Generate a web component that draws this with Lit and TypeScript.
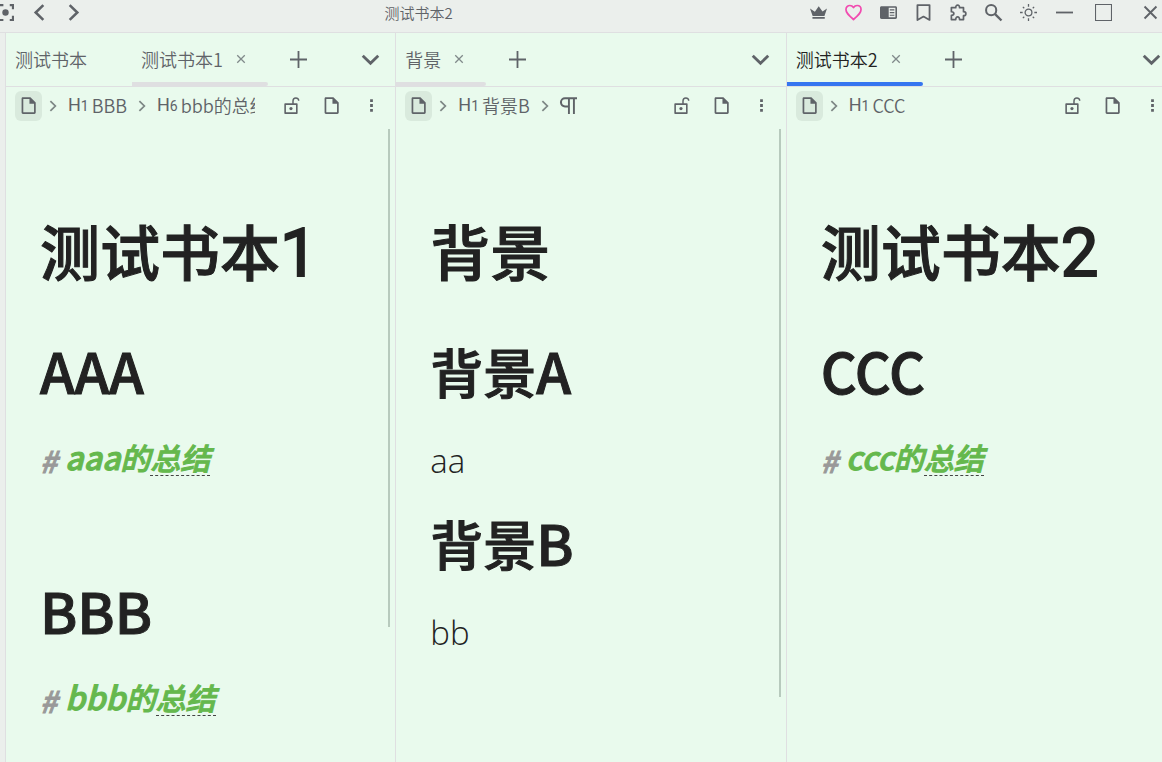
import { LitElement, html, css, svg, nothing } from "lit";
import { customElement, property } from "lit/decorators.js";

const icons: Record<string, unknown> = {
  focus: svg`<path d="M1 5V1h5M12 1h3v4M1 11v4h5M12 15h3v-4" fill="none" stroke="currentColor" stroke-width="2"/><circle cx="8" cy="8" r="3" fill="currentColor"/>`,
  back: svg`<path d="M11.6 1 4.4 8l7.200 7" fill="none" stroke="currentColor" stroke-width="2.400"/>`,
  forward: svg`<path d="M4.400 1l7.200 7-7.200 7" fill="none" stroke="currentColor" stroke-width="2.400"/>`,
  crown: svg`<path d="M2.300 13.800h11.600v-1.500H2.300zM0 4.300l2.500 7h11.100L16 4.300l-4.200 2.800L8.200 2 4.600 7.200z" fill="currentColor"/>`,
  heart: svg`<path d="M8 14.600C3 10.300.9 8.300.9 5.200.9 3 2.500 1.400 4.600 1.400 6 1.400 7.200 2.100 8 3.300c.8-1.200 2-1.900 3.400-1.900 2.100 0 3.700 1.600 3.700 3.800 0 3.100-2.100 5.100-7.100 9.400z" fill="none" stroke="#f14bb0" stroke-width="1.600" stroke-linejoin="round"/>`,
  panel: svg`<path fill="currentColor" fill-rule="evenodd" d="M1.500 2h13c1 0 1.500.6 1.500 1.500v9c0 .9-.5 1.500-1.500 1.500h-13C.5 14 0 13.400 0 12.500v-9C0 2.600.5 2 1.500 2zM8.200 3.500v9h6.300v-9zM9.200 5h4.300v1.100H9.200zM9.200 7.500h4.300v1.100H9.200zM9.200 10h4.300v1.100H9.200z"/>`,
  bookmark: svg`<path d="M2.300 1h11.400v14L8 11.800 2.300 15z" fill="none" stroke="currentColor" stroke-width="1.700" stroke-linejoin="round"/>`,
  puzzle: svg`<path d="M1.300 3.500h4.100c-.2-3.300 3.800-3.300 3.600 0h3.700v3.700c3 0 3 3.800 0 3.800v3.700H9c.1-3.400-3.700-3.400-3.600 0H1.300v-3.900c3.100 0 3.100-3.500 0-3.500z" fill="none" stroke="currentColor" stroke-width="1.600" stroke-linejoin="round"/>`,
  search: svg`<circle cx="5.800" cy="5.800" r="4.800" fill="none" stroke="currentColor" stroke-width="1.900"/><path d="M9.500 9.500l6 6" stroke="currentColor" stroke-width="2.200"/>`,
  sun: svg`<circle cx="8" cy="8" r="3.200" fill="none" stroke="currentColor" stroke-width="1.200"/><path d="M8 0v2.500M8 13.500V16M0 8h2.500M13.500 8H16M2.700 2.700l1.300 1.300M12 12l1.300 1.300M2.700 13.300 4 12M12 4l1.300-1.300" stroke="currentColor" stroke-width="1.200"/>`,
  minimize: svg`<path d="M0 8h16" stroke="currentColor" stroke-width="1.700"/>`,
  maximize: svg`<path d="M.5.5h15v15H.5z" fill="none" stroke="currentColor" stroke-width="1"/>`,
  close: svg`<path d="M2.400 2.400l11.200 11.200M13.600 2.400 2.400 13.600" stroke="currentColor" stroke-width="1.800"/>`,
  cross: svg`<path d="M3.700 3.700l8.600 8.600M12.300 3.700l-8.600 8.600" stroke="currentColor" stroke-width="1.500"/>`,
  plus: svg`<path d="M8 0v16M0 8h16" stroke="currentColor" stroke-width="1.700"/>`,
  down: svg`<path d="M.7 4.500 8 11.500l7.300-7" fill="none" stroke="currentColor" stroke-width="2.700"/>`,
  arrow: svg`<path d="M5 2.300l5.700 5.700L5 13.700" fill="none" stroke="currentColor" stroke-width="2"/>`,
  file: svg`<path d="M1.500 1.500C1.500.7 2 .200 2.800.200h7L14.800 5.100v9.500c0 .8-.5 1.300-1.300 1.300H2.800c-.8 0-1.300-.5-1.300-1.300zM3.100 1.800v12.500h10.100V6.300H8.900V1.800z" fill="currentColor" fill-rule="evenodd"/>`,
  lock: svg`<path d="M2 6.700h11v8.500H2z" fill="none" stroke="currentColor" stroke-width="1.500" stroke-linejoin="round"/><path d="M9.400 6.600V3.800c0-3.700 5.400-3.700 5.400-.3" fill="none" stroke="currentColor" stroke-width="1.400"/><circle cx="7.500" cy="10.900" r="1.500" fill="currentColor"/>`,
  more: svg`<path d="M6.700 2.200h2.600v2.600H6.700zM6.700 6.700h2.600v2.600H6.700zM6.700 11.300h2.600v2.600H6.700z" fill="currentColor"/>`,
  pilcrow: svg`<path d="M4.700.3h11.300v1.800h-2V16h-1.800V2.200H9.300V16H7.500V9.800H4.700A4.700 4.700 0 0 1 4.700.3zM7.500 2.200H4.700a2.850 2.850 0 0 0 0 5.700h2.800z" fill="currentColor" fill-rule="evenodd"/>`,
};

@customElement("ui-icon")
class UiIcon extends LitElement {
  @property() name = "file";
  static styles = css`
    :host { display: inline-flex; width: 17px; height: 17px; flex: none; }
    svg { width: 100%; height: 100%; overflow: visible; display: block; }
  `;
  render() {
    return html`<svg viewBox="0 0 16 16" aria-hidden="true">${icons[this.name]}</svg>`;
  }
}

interface Tab { title: string; active?: boolean; }
interface Crumb { level?: number; text?: string; icon?: string; }
interface Block {
  kind: "h1" | "h6" | "p" | "blank";
  text?: string;
  latin?: string;
  marked?: string;
}
interface Pane {
  title: string;
  titleDigit?: string;
  focused?: boolean;
  scroll?: number;
  tabs: Tab[];
  crumbs: Crumb[];
  blocks: Block[];
}

const panes: Pane[] = [
  {
    title: "测试书本",
    titleDigit: "1",
    scroll: 498,
    tabs: [{ title: "测试书本" }, { title: "测试书本1", active: true }],
    crumbs: [{ level: 1, text: "BBB" }, { level: 6, text: "bbb的总结" }],
    blocks: [
      { kind: "h1", latin: "AAA" },
      { kind: "h6", latin: "aaa", text: "的", marked: "总结" },
      { kind: "blank" },
      { kind: "h1", latin: "BBB" },
      { kind: "h6", latin: "bbb", text: "的", marked: "总结" },
    ],
  },
  {
    title: "背景",
    scroll: 568,
    tabs: [{ title: "背景", active: true }],
    crumbs: [{ level: 1, text: "背景B" }, { icon: "pilcrow" }],
    blocks: [
      { kind: "h1", text: "背景", latin: "A" },
      { kind: "p", text: "aa" },
      { kind: "h1", text: "背景", latin: "B" },
      { kind: "p", text: "bb" },
    ],
  },
  {
    title: "测试书本",
    titleDigit: "2",
    focused: true,
    tabs: [{ title: "测试书本2", active: true }],
    crumbs: [{ level: 1, text: "CCC" }],
    blocks: [
      { kind: "h1", latin: "CCC" },
      { kind: "h6", latin: "ccc", text: "的", marked: "总结" },
    ],
  },
];

@customElement("editor-pane")
class EditorPane extends LitElement {
  @property({ attribute: false }) pane!: Pane;

  static styles = css`
    :host {
      display: flex; flex-direction: column; position: relative; min-width: 0;
      border-left: 1px solid #dfdfe1; background: #e9faed; color: #5f6368;
    }
    button {
      border: 0; padding: 0; margin: 0; background: none; color: inherit; font: inherit;
      display: flex; align-items: center; justify-content: center; cursor: pointer;
    }
    .tabs { display: flex; height: 53px; border-bottom: 1px solid #dfdfe1; }
    .tab { display: flex; align-items: center; position: relative; padding: 0 20px 2px 9px; gap: 11px; }
    .tab.active::after {
      content: ""; position: absolute; left: 0; right: 0; bottom: 0; height: 4px;
      border-radius: 0 2px 2px 0; background: #dfdfe1;
    }
    .focused .tab.active { color: #222; }
    .focused .tab.active::after { background: #3575f0; }
    .tab-close { width: 14px; height: 16px; color: #80898a; }
    .tab-close ui-icon { width: 14px; height: 14px; }
    .tab:not(.active) .tab-close { visibility: hidden; }
    .add { width: 62px; }
    .switch { width: 50px; margin-left: auto; }
    .bar { display: flex; align-items: center; height: 37px; padding: 0 4px 0 9px; }
    .crumbs { display: flex; align-items: center; flex: 1; min-width: 0; overflow: hidden; margin-right: 16px; white-space: nowrap; }
    .doc { width: 27px; height: 30px; border-radius: 6px; background: #d9eadd; flex: none; }
    .arrow { width: 14px; height: 14px; margin: 0 8px 0 4px; color: #7d8785; }
    .crumb { flex: none; gap: 3px; margin-right: 4px; padding-bottom: 2px; }
    .crumb ui-icon { padding-top: 2px; }
    .level { font: 400 18px/24px "Roboto", sans-serif; }
    .level sub { font-size: 14px; line-height: 1; vertical-align: baseline; }
    .tool { width: 40px; height: 30px; flex: none; }
    .content {
      flex: 1; display: flex; flex-direction: column; gap: 24px; padding: 86px 20px 24px 34px;
      color: #222; font-family: "Noto Sans CJK SC", sans-serif;
    }
    h1, h2, h6, p { margin: 0; white-space: nowrap; }
    h1, h2 { font-weight: 500; line-height: 80px; height: 80px; -webkit-text-stroke: 1px #222; }
    h1 { font-size: 60px; margin-bottom: 17px; }
    h1 .latin { font: 400 67px/0 "Roboto", sans-serif; -webkit-text-stroke: 2px #222; }
    h2 { font-size: 53px; }
    h2 .latin { font-size: 56px; line-height: 0; }
    h6, p { height: 44px; line-height: 44px; }
    h6 { display: flex; align-items: center; font-size: 30px; font-style: italic; font-weight: 500; color: #65b84d; -webkit-text-stroke: 1px currentColor; }
    h6 .latin { font-size: 32px; line-height: 0; }
    .hash { color: #999; margin-right: 8px; padding-top: 6px; }
    .marked { display: inline-block; line-height: 36px; border-bottom: 1px dashed #444; }
    p { font: 300 33px/52px "Open Sans", "Noto Sans CJK SC", sans-serif; }
    .thumb { position: absolute; right: 5px; top: 96px; width: 2px; background: #b7cabd; }
  `;

  private block(b: Block) {
    const latin = b.latin ? html`<span class="latin">${b.latin}</span>` : nothing;
    switch (b.kind) {
      case "h1": return html`<h2>${b.text ?? ""}${latin}</h2>`;
      case "h6": return html`<h6><span class="hash">#</span><span>${latin}${b.text}<span class="marked">${b.marked}</span></span></h6>`;
      default: return html`<p>${b.text ?? ""}</p>`;
    }
  }

  render() {
    const p = this.pane;
    return html`
      <div class="tabs ${p.focused ? "focused" : ""}">
        ${p.tabs.map((t) => html`
          <div class="tab ${t.active ? "active" : ""}">
            <button>${t.title}</button>
            <button class="tab-close" aria-label="关闭"><ui-icon name="cross"></ui-icon></button>
          </div>`)}
        <button class="add" aria-label="新建"><ui-icon name="plus"></ui-icon></button>
        <button class="switch" aria-label="切换页签"><ui-icon name="down"></ui-icon></button>
      </div>
      <div class="bar">
        <nav class="crumbs">
          <button class="doc" aria-label="文档"><ui-icon name="file"></ui-icon></button>
          ${p.crumbs.map((c) => html`
            <ui-icon class="arrow" name="arrow"></ui-icon>
            <button class="crumb" aria-label=${c.text ?? "段落"}>
              ${c.icon
                ? html`<ui-icon name=${c.icon}></ui-icon>`
                : html`<span class="level">H<sub>${c.level}</sub></span><span>${c.text}</span>`}
            </button>`)}
        </nav>
        <button class="tool" aria-label="锁定"><ui-icon name="lock"></ui-icon></button>
        <button class="tool" aria-label="文档菜单"><ui-icon name="file"></ui-icon></button>
        <button class="tool" aria-label="更多"><ui-icon name="more"></ui-icon></button>
      </div>
      <article class="content">
        <h1>${p.title}${p.titleDigit ? html`<span class="latin">${p.titleDigit}</span>` : nothing}</h1>
        ${p.blocks.map((b) => this.block(b))}
      </article>
      ${p.scroll ? html`<div class="thumb" style="height:${p.scroll}px"></div>` : nothing}
    `;
  }
}

@customElement("app-root")
class AppRoot extends LitElement {
  static styles = css`
    :host {
      display: flex; flex-direction: column; height: 100vh; overflow: hidden;
      background: #ebefec; color: #5f6368;
      font: 350 18px/26px "Noto Sans CJK SC", sans-serif;
    }
    .titlebar { display: flex; align-items: flex-start; height: 32px; flex: none; border-bottom: 1px solid #dfdfe1; }
    button {
      border: 0; padding: 0; background: none; color: inherit; font: inherit; flex: none;
      display: flex; align-items: center; justify-content: center; width: 34px; height: 25px; cursor: pointer;
    }
    .nav { display: flex; margin-left: -12px; }
    .title { flex: 1; text-align: center; font-size: 15px; line-height: 25px; margin-right: 54px; }
    .tools, .window { display: flex; }
    .tools { gap: 1px; margin-right: 2px; }
    .window { gap: 5px; }
    .window button:last-child { margin-left: 8px; margin-right: -5px; }
    .panes { flex: 1; min-height: 0; display: grid; grid-template-columns: repeat(3, minmax(0, 1fr)); margin: 0 -14px 0 5px; }
  `;

  render() {
    const btn = (name: string, label: string) =>
      html`<button aria-label=${label}><ui-icon name=${name}></ui-icon></button>`;
    return html`
      <header class="titlebar">
        <div class="nav">${btn("focus", "聚焦")}${btn("back", "后退")}${btn("forward", "前进")}</div>
        <div class="title">测试书本2</div>
        <div class="tools">
          ${btn("crown", "会员")}${btn("heart", "赞助")}${btn("panel", "侧栏")}${btn("bookmark", "书签")}
          ${btn("puzzle", "插件")}${btn("search", "搜索")}${btn("sun", "外观")}
        </div>
        <div class="window">${btn("minimize", "最小化")}${btn("maximize", "最大化")}${btn("close", "关闭")}</div>
      </header>
      <main class="panes">
        ${panes.map((p) => html`<editor-pane .pane=${p}></editor-pane>`)}
      </main>
    `;
  }
}
